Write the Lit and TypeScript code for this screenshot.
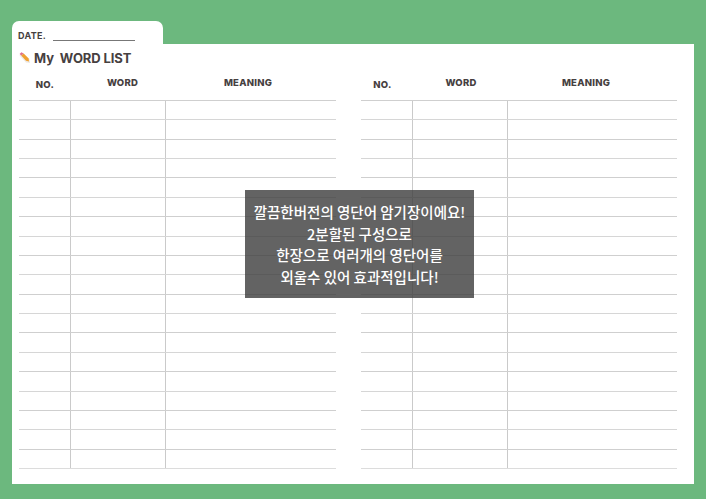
import { LitElement, html, css } from "lit";
import { customElement } from "lit/decorators.js";

const ROWS = Array.from({ length: 19 }, (_, i) => i);

@customElement("app-root")
export class AppRoot extends LitElement {
  static styles = css`
    :host {
      display: block;
      width: 706px;
      height: 499px;
      background: #6cb87e;
      font-family: Inter, "Liberation Sans", sans-serif;
      color: #46403f;
      position: relative;
      overflow: hidden;
    }
    .page {
      display: flex;
      flex-direction: column;
      box-sizing: border-box;
      height: 499px;
      padding: 21px 12px 15px;
    }
    .tab {
      width: 151px;
      height: 23px;
      box-sizing: border-box;
      flex: none;
      background: #fff;
      border-radius: 7px 7px 0 0;
      display: flex;
      align-items: flex-end;
      padding: 0 0 3px 6px;
      gap: 7px;
    }
    .date {
      font-size: 9px;
      font-weight: 700;
      line-height: 11px;
      letter-spacing: 0.3px;
    }
    .date-line {
      width: 82px;
      height: 1px;
      background: #777;
    }
    .sheet {
      flex: 1;
      background: #fff;
      display: grid;
      grid-template-columns: 317px 316px;
      column-gap: 25px;
      padding: 0 17px 15px 7px;
      min-height: 0;
    }
    .col {
      display: flex;
      flex-direction: column;
      min-height: 0;
    }
    .title {
      display: flex;
      align-items: center;
      gap: 4px;
      height: 17px;
      margin-top: 5px;
      font-size: 13px;
      font-weight: 700;
      white-space: pre;
      letter-spacing: -0.1px;
    }
    .title svg {
      flex: none;
    }
    .head {
      margin-top: auto;
      height: 28px;
      display: grid;
      font-size: 9.5px;
      font-weight: 800;
      letter-spacing: 0.25px;
      text-align: center;
      line-height: 12px;
    }
    .left .head {
      grid-template-columns: 52px 95px 170px;
    }
    .right .head {
      grid-template-columns: 52px 95px 169px;
    }
    .h-no {
      padding-top: 7px;
    }
    .h-word,
    .h-mean {
      padding-top: 5px;
    }
    .left .h-word {
      padding-left: 8px;
    }
    .left .h-mean {
      padding-right: 6px;
    }
    .right .h-no {
      padding-right: 9px;
    }
    .right .h-word {
      padding-left: 1px;
    }
    .right .h-mean {
      padding-right: 13px;
    }
    .rows {
      height: 369px;
      flex: none;
      display: grid;
      grid-auto-rows: 1fr;
      box-sizing: border-box;
      border-bottom: 1px solid #dcdcdc;
    }
    .row {
      display: grid;
      grid-template-columns: 52px 95px 1fr;
      border-top: 1px solid #cfcfcf;
    }
    .row:nth-child(2n) {
      border-top-color: #d6d6d6;
    }
    .cell {
      border-right: 1px solid #cacaca;
    }
    .cell:last-child {
      border-right: 0;
    }
    .note {
      position: absolute;
      left: 245px;
      top: 190px;
      width: 229px;
      height: 108px;
      box-sizing: border-box;
      padding-top: 11px;
      background: rgba(60, 60, 60, 0.8);
      color: #fff;
      font-family: "Noto Sans CJK KR", sans-serif;
      font-size: 14.5px;
      font-weight: 500;
      line-height: 21.5px;
      text-align: center;
      white-space: nowrap;
    }
  `;

  private table(side: string, title: boolean) {
    return html`
      <div class="col ${side}">
        ${title
          ? html`<div class="title">
              <svg width="11" height="11" viewBox="0 0 11 11">
                <path d="M0.5 3.5 L7 10.5 L11 11 L10.5 7 L4 1 Z" fill="#e4dfdb" opacity="0.7" />
                <path d="M2.2 3.6 L7 8.8 L10 9.6 L9.6 6.4 L4.6 1.4 Z" fill="#f0a030" />
                <path d="M0.6 2 L2.4 0.2 L4.6 1.4 L2.2 3.6 Z" fill="#e0708a" />
              </svg>
              <span>My  WORD LIST</span>
            </div>`
          : ""}
        <div class="head">
          <div class="h-no">NO.</div>
          <div class="h-word">WORD</div>
          <div class="h-mean">MEANING</div>
        </div>
        <div class="rows">
          ${ROWS.map(
            () => html`<div class="row">
              <div class="cell"></div>
              <div class="cell"></div>
              <div class="cell"></div>
            </div>`
          )}
        </div>
      </div>
    `;
  }

  render() {
    return html`
      <div class="page">
        <div class="tab">
          <span class="date">DATE.</span>
          <span class="date-line"></span>
        </div>
        <div class="sheet">
          ${this.table("left", true)} ${this.table("right", false)}
        </div>
      </div>
      <div class="note">
        깔끔한버전의 영단어 암기장이에요!<br />
        2분할된 구성으로<br />
        한장으로 여러개의 영단어를<br />
        외울수 있어 효과적입니다!
      </div>
    `;
  }
}
